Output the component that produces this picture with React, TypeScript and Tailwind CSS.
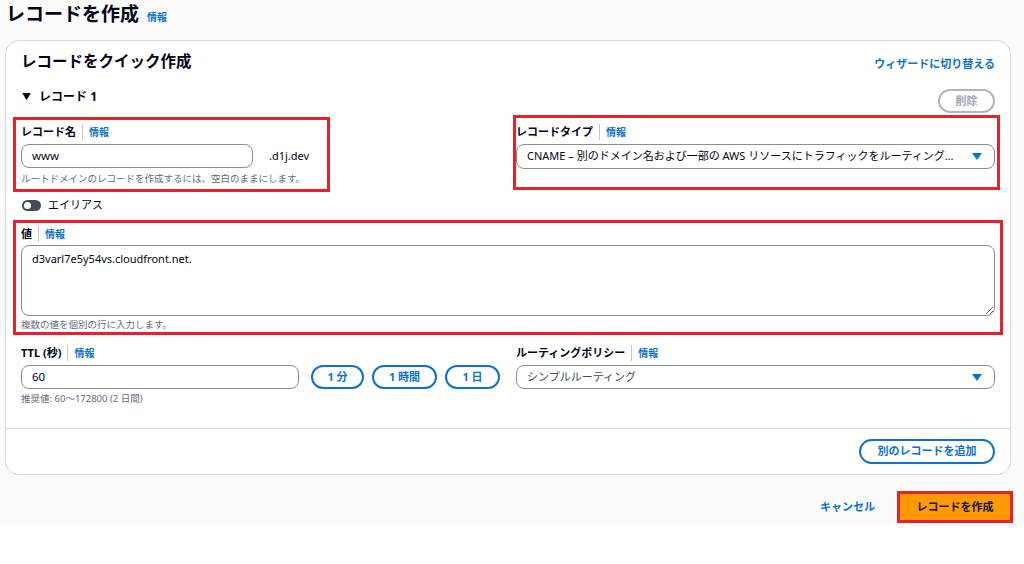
import React from 'react';

const font = { fontFamily: '"Noto Sans", "Noto Sans CJK JP", sans-serif' };

const Info = () => (
  <span className="ml-[6px] border-l border-[#c6c6cd] pl-[6px] text-[10px] font-bold text-[#0972d3]">情報</span>
);

const FieldLabel = ({ children }: { children: React.ReactNode }) => (
  <div className="flex h-4 items-center text-[11px] font-bold leading-4 text-[#000716]">
    {children}
    <Info />
  </div>
);

const Caret = () => (
  <svg width="10" height="7" viewBox="0 0 10 7" className="shrink-0">
    <polygon points="0,0 10,0 5,7" fill="#0972d3" />
  </svg>
);

const RedBox = ({ className }: { className: string }) => (
  <span className={`pointer-events-none absolute border-[3px] border-[#e8202b] ${className}`} />
);

const PillButton = ({ children, width }: { children: React.ReactNode; width: string }) => (
  <button className={`flex h-6 ${width} items-center justify-center rounded-full border-2 border-[#0972d3] text-[11px] font-bold text-[#0972d3]`}>
    {children}
  </button>
);

export default function App() {
  return (
    <div className="h-[564px] w-full overflow-hidden bg-white text-[#000716]" style={font}>
      <div className="h-[525px] bg-[#fafafa]">
        {/* Page title */}
        <div className="flex h-7 items-end pl-[6px]">
          <h1 className="text-[19px] font-bold leading-7">レコードを作成</h1>
          <span className="mb-[3px] ml-2 text-[10px] font-bold text-[#0972d3]">情報</span>
        </div>

        {/* Card */}
        <div className="mx-[5px] mt-3 w-[1006px] rounded-[14px] border border-[#d5d9de] bg-white px-[15px] pt-[8px] pb-[10px]">
          <div className="flex h-6 items-start justify-between">
            <h2 className="text-[15.5px] font-bold leading-6">レコードをクイック作成</h2>
            <a className="mt-[3px] text-[11px] font-bold leading-6 text-[#0972d3]">ウィザードに切り替える</a>
          </div>

          <div className="mt-4 flex h-6 items-start justify-between">
            <div className="flex h-4 items-center gap-2 pl-[1px] text-[12px] font-bold">
              <span className="text-[9px]">▼</span>
              <span>レコード 1</span>
            </div>
            <button className="h-6 w-[57px] rounded-full border-2 border-[#b4b4bb] text-[11px] font-bold text-[#9ba7b6]">削除</button>
          </div>

          {/* Record name / type */}
          <div className="mt-[11px] grid grid-cols-2 gap-4">
            <div className="relative">
              <RedBox className="-left-2 -top-[7px] -bottom-[6px] w-[317px]" />
              <FieldLabel>レコード名</FieldLabel>
              <div className="mt-1 flex items-center">
                <div className="flex h-6 w-[232px] items-center rounded-lg border border-[#8c8c94] bg-white px-[10px] text-[11.5px]">www</div>
                <span className="ml-4 text-[11px]">.d1j.dev</span>
              </div>
              <div className="mt-1 h-[14px] text-[9.5px] leading-[14px] text-[#5f6b7a]">ルートドメインのレコードを作成するには、空白のままにします。</div>
            </div>
            <div className="relative">
              <RedBox className="-left-[3px] -right-[5px] -top-[9px] -bottom-[4px]" />
              <FieldLabel>レコードタイプ</FieldLabel>
              <div className="mt-1 flex h-[25px] items-center justify-between rounded-lg border border-[#8c8c94] bg-white pr-[12px] pl-[10px] text-[11px]">
                <span className="truncate">CNAME – 別のドメイン名および一部の AWS リソースにトラフィックをルーティング…</span>
                <Caret />
              </div>
            </div>
          </div>

          {/* Alias toggle */}
          <div className="mt-[11px] flex h-4 items-center gap-[7px] pl-[1px] text-[11px]">
            <span className="flex h-[11px] w-[19px] items-center rounded-full bg-[#414d5c] pl-[2px]">
              <span className="h-[7px] w-[7px] rounded-full bg-white" />
            </span>
            <span>エイリアス</span>
          </div>

          {/* Value */}
          <div className="relative mt-[13px]">
            <RedBox className="-left-2 -right-2 -top-[6px] -bottom-[3px]" />
            <FieldLabel>値</FieldLabel>
            <textarea
              readOnly
              defaultValue="d3varl7e5y54vs.cloudfront.net."
              className="mt-[3px] block h-[71px] w-full rounded-lg border border-[#8c8c94] bg-white px-[10px] py-[5px] text-[11px] leading-4 outline-none"
            />
            <div className="mt-[2px] h-[14px] text-[9.5px] leading-[14px] text-[#5f6b7a]">複数の値を個別の行に入力します。</div>
          </div>

          {/* TTL / routing */}
          <div className="mt-[13px] grid grid-cols-2 gap-4">
            <div>
              <FieldLabel>TTL (秒)</FieldLabel>
              <div className="mt-1 flex items-center">
                <div className="flex h-6 w-[278px] items-center rounded-lg border border-[#8c8c94] bg-white px-[10px] text-[11.5px]">60</div>
                <div className="ml-3 flex gap-2">
                  <PillButton width="w-[53px]">1 分</PillButton>
                  <PillButton width="w-[65px]">1 時間</PillButton>
                  <PillButton width="w-[55px]">1 日</PillButton>
                </div>
              </div>
              <div className="mt-[3px] h-[14px] text-[9.5px] leading-[14px] text-[#5f6b7a]">推奨値: 60〜172800 (2 日間)</div>
            </div>
            <div>
              <FieldLabel>ルーティングポリシー</FieldLabel>
              <div className="mt-1 flex h-6 items-center justify-between rounded-lg border border-[#8c8c94] bg-white pr-[12px] pl-[10px] text-[11px] text-[#414d5c]">
                <span>シンプルルーティング</span>
                <Caret />
              </div>
            </div>
          </div>

          <div className="-mx-[15px] mt-[22px] border-t border-[#d5d9de]" />

          <div className="mt-[10px] flex justify-end">
            <button className="h-[25px] w-[136px] rounded-full border-2 border-[#0972d3] text-[11px] font-bold text-[#0972d3]">別のレコードを追加</button>
          </div>
        </div>

        {/* Footer actions */}
        <div className="mt-4 flex items-center justify-end pr-[11px]">
          <a className="text-[11px] font-bold text-[#0972d3]">キャンセル</a>
          <div className="ml-[22px] border-[3px] border-[#e8202b]">
            <button className="flex h-[26px] w-[110px] items-center justify-center bg-[#ff9900] text-[11px] font-bold text-[#0f141a]">レコードを作成</button>
          </div>
        </div>
      </div>
    </div>
  );
}
